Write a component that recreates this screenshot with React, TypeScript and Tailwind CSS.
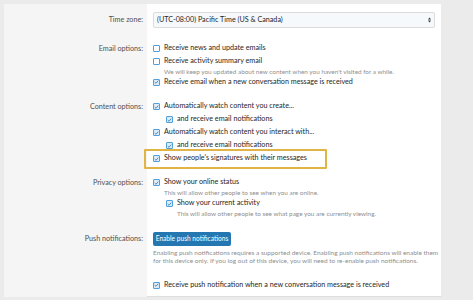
import React from 'react';

const Check: React.FC<{ checked?: boolean }> = ({ checked }) => (
  <span
    className={
      'inline-flex w-[7px] h-[7px] shrink-0 items-center justify-center border border-[#4e9fdb] rounded-[1px] ' +
      (checked ? 'bg-[#dcebf8]' : 'bg-white')
    }
  >
    {checked && (
      <svg viewBox="0 0 8 8" className="w-[6px] h-[6px]">
        <path d="M1.2 4.2 L3.2 6 L6.8 1.8" fill="none" stroke="#2f78b8" strokeWidth="1.3" />
      </svg>
    )}
  </span>
);

const Option: React.FC<{ label: string; checked?: boolean; sub?: boolean; hint?: string; boxed?: boolean }> = ({
  label,
  checked,
  sub,
  hint,
  boxed,
}) => (
  <div className={sub ? 'pl-[13px]' : ''}>
    <div className="relative flex items-center gap-[4px] h-[13px] text-[#262626]">
      <Check checked={checked} />
      <span className="whitespace-nowrap">{label}</span>
      {boxed && (
        <span className="absolute left-[-9px] top-[-3.5px] w-[183px] h-[20px] border-2 border-[#e0b445] rounded-[1px]" />
      )}
    </div>
    {hint && <div className="pl-[11px] text-[6.4px] leading-[8px] text-[#8f8f8f] whitespace-nowrap">{hint}</div>}
  </div>
);

const Row: React.FC<{ label: string; lh: string; pt: string; pb: string; children: React.ReactNode }> = ({
  label,
  lh,
  pt,
  pb,
  children,
}) => (
  <div className="flex">
    <div className={'w-[143px] shrink-0 bg-[#f5f5f5] pr-[4px] text-right text-[#505050] ' + pt + ' ' + pb}>
      <div className={lh}>{label}</div>
    </div>
    <div className={'flex-1 pl-[6px] pr-[6px] ' + pt + ' ' + pb}>{children}</div>
  </div>
);

export default function App() {
  return (
    <div
      className="w-[473px] h-[300px] bg-[#ebebeb] pt-[4px] pl-[4px] overflow-hidden text-[7.2px]"
      style={{ fontFamily: 'Lato, "Open Sans", sans-serif' }}
    >
      <div className="w-[437px] h-[293px] bg-white border-b border-[#dedede] flex flex-col">
        <Row label="Time zone:" lh="leading-[16px]" pt="pt-[8px]" pb="pb-[6px]">
          <div className="flex items-center justify-between h-[16px] border border-[#dcdcdc] rounded-[2px] bg-[#f6f9fc] pl-[3px] pr-[3px] text-[#262626]">
            <span>(UTC-08:00) Pacific Time (US &amp; Canada)</span>
            <svg viewBox="0 0 6 10" className="w-[3px] h-[6px]">
              <path d="M0 4 L3 0 L6 4 Z M0 6 L3 10 L6 6 Z" fill="#333" />
            </svg>
          </div>
        </Row>
        <Row label="Email options:" lh="leading-[13px]" pt="pt-[7.5px]" pb="pb-[6px]">
          <Option label="Receive news and update emails" />
          <Option
            label="Receive activity summary email"
            hint="We will keep you updated about new content when you haven't visited for a while."
          />
          <Option label="Receive email when a new conversation message is received" checked />
        </Row>
        <Row label="Content options:" lh="leading-[13px]" pt="pt-[5.5px]" pb="pb-[5.5px]">
          <Option label="Automatically watch content you create..." checked />
          <Option label="and receive email notifications" checked sub />
          <Option label="Automatically watch content you interact with..." checked />
          <Option label="and receive email notifications" checked sub />
          <Option label="Show people's signatures with their messages" checked boxed />
        </Row>
        <Row label="Privacy options:" lh="leading-[13px]" pt="pt-[5.5px]" pb="pb-[7px]">
          <Option label="Show your online status" checked hint="This will allow other people to see when you are online." />
          <Option
            label="Show your current activity"
            checked
            sub
            hint="This will allow other people to see what page you are currently viewing."
          />
        </Row>
        <Row label="Push notifications:" lh="leading-[14px]" pt="pt-[7px]" pb="pb-[5px]">
          <button className="h-[14px] w-[78px] rounded-[2px] bg-[#2577b1] text-white text-[6.6px]">
            Enable push notifications
          </button>
          <div className="mt-[3px] text-[6.5px] leading-[8px] text-[#8f8f8f] whitespace-nowrap">
            <div>Enabling push notifications requires a supported device. Enabling push notifications will enable them</div>
            <div>for this device only. If you log out of this device, you will need to re-enable push notifications.</div>
          </div>
          <div className="mt-[13.5px]">
            <Option label="Receive push notification when a new conversation message is received" checked />
          </div>
        </Row>
        <div className="flex flex-1">
          <div className="w-[143px] bg-[#f5f5f5]" />
        </div>
      </div>
    </div>
  );
}
